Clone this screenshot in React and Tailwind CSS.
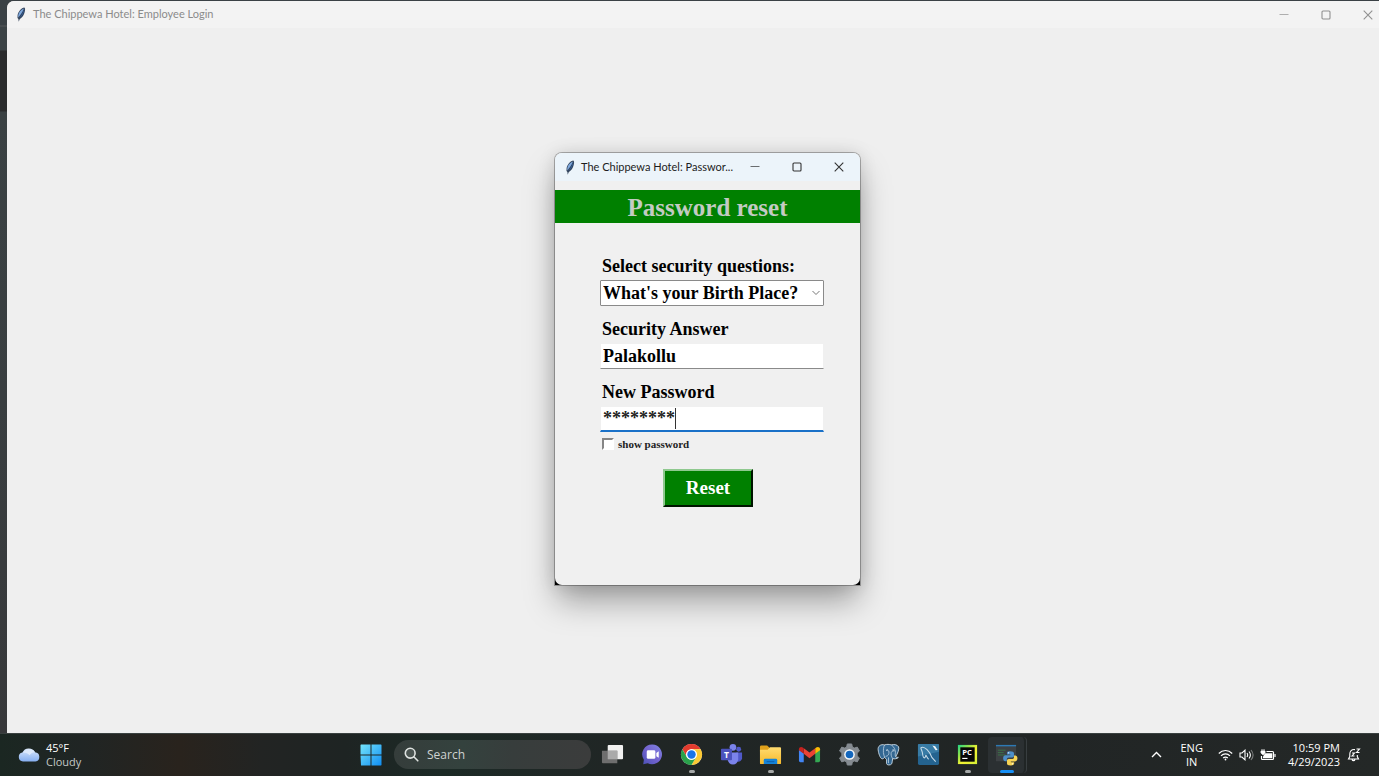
import React, { useState } from "react";

function Feather({ className }) {
  return (
    <svg viewBox="0 0 10 15" className={className} aria-hidden="true">
      <path d="M8.400.5C5.600 1 2.200 4.200 1.600 8.300L1.500 11l.9 1 .3 2.700L3.800 12c3.200-1.600 5.200-5.800 5.300-10.200z" fill="#33435a" />
      <path d="M8 1.400C5.200 2.200 2.700 5 2.300 8.300l-.1 2.200C4.200 8.500 6.300 5 8 1.400z" fill="#7fa9de" />
      <path d="M8.500 1.700C8 5.500 6.400 9 3.300 11.200 5.400 8.500 7 5.400 8.500 1.700z" fill="#2f65b0" />
    </svg>
  );
}

function WindowButtons({ className }) {
  return (
    <div className={className}>
      <button type="button" aria-label="Minimize" className="flex h-full w-[42px] items-center justify-center">
        <svg viewBox="0 0 10 10" className="size-[10px]" stroke="currentColor" fill="none"><path d="M.5 4.500h9" opacity=".7" /></svg>
      </button>
      <button type="button" aria-label="Maximize" className="flex h-full w-[42px] items-center justify-center">
        <svg viewBox="0 0 10 10" className="size-[10px]" stroke="currentColor" fill="none" strokeWidth="1.100"><rect x="1" y="1" width="8" height="8" rx="1" /></svg>
      </button>
      <button type="button" aria-label="Close" className="flex h-full w-[42px] items-center justify-center">
        <svg viewBox="0 0 10 10" className="size-[10px]" stroke="currentColor" fill="none" strokeWidth="1.100"><path d="M.7.7l8.600 8.600M9.300.7L.7 9.300" /></svg>
      </button>
    </div>
  );
}

function PasswordDialog() {
  const [question, setQuestion] = useState("birth");
  const [answer, setAnswer] = useState("Palakollu");
  const [password, setPassword] = useState("********");
  return (
    <section
      aria-label="Password reset"
      className="absolute left-[548px] top-[152px] w-[305px] rounded-t-[7px] bg-linear-to-b from-[#b4b4b4] from-80% to-black to-95% shadow-[0_0_0_1px_rgba(0,0,0,0.28),0_18px_32px_-2px_rgba(0,0,0,0.34),0_0_18px_rgba(0,0,0,0.12)]"
    >
      <div className="overflow-hidden rounded-[7px] bg-[#f0f0f0]">
        <header className="flex h-[28px] items-center bg-[#ecf4fa] pl-[10px]">
          <Feather className="h-[15px] w-[10px] shrink-0" />
          <h2 className="ml-[6px] flex-1 whitespace-nowrap font-[Lato,sans-serif] text-[11px] text-[#1c1c1c]">The Chippewa Hotel: Passwor...</h2>
          <WindowButtons className="flex h-full shrink-0 text-[#333]" />
        </header>
        <h1 className="mt-[9px] h-[33px] bg-[#008000] text-center text-[25px] font-bold leading-[36px] text-[#c3cbc3]">Password reset</h1>
        <form className="flex h-[362px] flex-col pl-[45px] pr-[36px] pt-[31px] text-[18px] font-bold text-black" onSubmit={(e) => e.preventDefault()}>
          <label htmlFor="question" className="h-[26px] pl-[2px] leading-[24px]">Select security questions:</label>
          <div className="relative mb-[11px]">
            <select
              id="question"
              value={question}
              onChange={(e) => setQuestion(e.target.value)}
              className="block h-[26px] w-full appearance-none rounded-[1px] border border-[#8a8a8a] bg-white pl-[2px] leading-[24px]"
            >
              <option value="birth">What's your Birth Place?</option>
            </select>
            <svg viewBox="0 0 8 6" className="pointer-events-none absolute right-[4px] top-[10px] h-[6px] w-[8px]" fill="none" stroke="#777"><path d="M.5 1L4 4.500 7.500 1" /></svg>
          </div>
          <label htmlFor="answer" className="h-[26px] pl-[2px] leading-[24px]">Security Answer</label>
          <input
            id="answer"
            value={answer}
            onChange={(e) => setAnswer(e.target.value)}
            className="mb-[11px] h-[26px] w-full border border-x-[#f0f0f0] border-t-[#f0f0f0] border-b-[#8a8a8a] bg-white pl-[2px] leading-[24px] outline-none"
          />
          <label htmlFor="password" className="h-[26px] pl-[2px] leading-[24px]">New Password</label>
          <div className="relative">
            <input
              id="password"
              value={password}
              onChange={(e) => setPassword(e.target.value)}
              className="block h-[26px] w-full border border-b-2 border-x-[#f0f0f0] border-t-[#f0f0f0] border-b-[#1a71c8] bg-white pl-[2px] leading-[24px] text-[#222] outline-none"
            />
            <span className="absolute left-[75px] top-[2px] h-[21px] w-px bg-[#333]" />
          </div>
          <div className="mt-[4px] flex h-[16px] items-center gap-[4px] pl-[2px]">
            <input id="show" type="checkbox" className="size-[12px] appearance-none border-2 border-b-white border-l-[#858585] border-r-white border-t-[#858585] bg-white" />
            <label htmlFor="show" className="text-[11px] leading-[16px] text-[#222]">show password</label>
          </div>
          <button
            type="submit"
            className="ml-[63px] mt-[17px] h-[38px] w-[90px] border-2 border-b-[#001500] border-l-[#8fc98f] border-r-[#001500] border-t-[#8fc98f] bg-[#008000] text-[19px] leading-[32px] text-white"
          >
            Reset
          </button>
        </form>
      </div>
    </section>
  );
}

const icons = {
  "Task View": (
    <>
      <rect x="7" y="2" width="16" height="15" rx="1" fill="#f1f1f1" />
      <path d="M1 8h16v13H2a1 1 0 0 1-1-1z" fill="#6e6e6e" />
      <path d="M7 8h10v9H7z" fill="#aaa" />
    </>
  ),
  Chat: (
    <>
      <path d="M12 1.500A10.300 10.300 0 1 1 7 21L2.300 22.300 3 17.500A10.300 10.300 0 0 1 12 1.500z" fill="url(#chatg)" />
      <rect x="6" y="7.500" width="9" height="9" rx="1.500" fill="#fff" />
      <path d="M16 10.500l2.500-2v7L16 13.700z" fill="#fff" />
    </>
  ),
  Chrome: (
    <>
      <circle cx="12" cy="12" r="11" fill="#fff" />
      <path d="M2.470 6.500A11 11 0 0 1 21.530 6.500H12a5.500 5.500 0 0 0-4.760 8.250z" fill="#e33b2e" />
      <path d="M21.530 6.500A11 11 0 0 1 12 23l4.760-8.250A5.500 5.500 0 0 0 12 6.500z" fill="#fcc934" />
      <path d="M2.470 6.500L7.240 14.750A5.500 5.500 0 0 0 16.760 14.750L12 23A11 11 0 0 1 2.470 6.500z" fill="#2aa14b" />
      <circle cx="12" cy="12" r="5.600" fill="#fff" />
      <circle cx="12" cy="12" r="4.400" fill="#1a73e8" />
    </>
  ),
  Teams: (
    <>
      <circle cx="19.500" cy="6.500" r="2.500" fill="#5059c9" />
      <circle cx="13.500" cy="4.500" r="3.500" fill="#7b83eb" />
      <path d="M17 10h6v6a4 4 0 0 1-5 3.500z" fill="#5059c9" />
      <path d="M8 10h11v7a5.500 5.500 0 0 1-11 0z" fill="#7b83eb" />
      <rect x="1" y="6" width="11.500" height="12" rx="1" fill="#4b53bc" />
      <text x="6.800" y="15.500" fontSize="9" fontWeight="700" textAnchor="middle" fill="#fff" fontFamily="Open Sans, sans-serif">T</text>
    </>
  ),
  "File Explorer": (
    <>
      <path d="M1 4a1.500 1.500 0 0 1 1.500-1.500h6L11 5v4H1z" fill="#e0a11b" />
      <path d="M1 7h8l2.500-2.500H22A1 1 0 0 1 23 5.500V21a1 1 0 0 1-1 1H2a1 1 0 0 1-1-1z" fill="url(#foldg)" />
      <path d="M5 22v-4a1.500 1.500 0 0 1 1.500-1.500h11A1.500 1.500 0 0 1 19 18v4z" fill="#1583d8" />
      <path d="M8 19h8v1H8z" fill="#0b5ca8" />
    </>
  ),
  Gmail: (
    <>
      <path d="M1 7l5 3.700V20H2.500A1.500 1.500 0 0 1 1 18.500z" fill="#4285f4" />
      <path d="M23 7l-5 3.700V20h3.500a1.500 1.500 0 0 0 1.500-1.500z" fill="#34a853" />
      <path d="M6 5.500l6 4.500 6-4.500v5.800L12 16l-6-4.700z" fill="#ea4335" />
      <path d="M1 6.500C1 4 3.500 3.500 5 4.700l1 .8v5.800L1 7.500z" fill="#c5221f" />
      <path d="M23 6.500c0-2.500-2.500-3-4-1.800l-1 .8v5.800l5-3.800z" fill="#fbbc04" />
    </>
  ),
  Settings: (
    <>
      <path d="M9.700 1h4.600l.7 3.200 2 1.100 3.100-1 2.300 4-2.400 2.200v3l2.400 2.200-2.300 4-3.100-1-2 1.100-.7 3.200H9.700L9 19.800l-2-1.100-3.100 1-2.300-4L4 13.500v-3L1.600 8.300l2.300-4 3.100 1 2-1.100z" fill="#858b91" stroke="#858b91" strokeLinejoin="round" />
      <circle cx="12" cy="12" r="5.600" fill="#f3f6f8" />
      <circle cx="12" cy="12" r="4" fill="#1266bd" />
    </>
  ),
  PostgreSQL: (
    <>
      <path d="M8 2C4 1 .8 3 1.200 7c.4 4 2.200 9 4 9.500 1.200.3 2-1 2.800-1.500.7 1.500 2 1.500 2 2.500v4c0 1.800 4.500 2 5.500 0 .6-1.500.3-3.500.8-5.200 2 .5 4.800.2 6-1.300-1.500 0-2.300 0-2.800-.7C21.500 11 23.500 6 22.500 4c-1.500-2.600-5-2.700-7.500-2-2-.7-5-.8-7 0z" fill="#336791" stroke="#d4e3ee" strokeWidth=".9" />
      <path d="M8 2C6.500 4 6.700 8 6.700 10s1 3.500 1.300 5M15 2c3 2 4.500 6 4.200 8-.2 1.800-.4 3 .3 4M9.500 8c1.500-1 3-.5 3 1.500s-.5 4-3.500 4.500M16.300 16.300c-.6-1.300-1.600-2.500-1.600-5 0-2 .8-3.300 3.800-3.200M12 15v6" fill="none" stroke="#c4d7e6" strokeWidth=".8" />
      <circle cx="10.500" cy="7" r=".6" fill="#fff" />
      <circle cx="16.800" cy="7.200" r=".6" fill="#fff" />
    </>
  ),
  "MySQL Workbench": (
    <>
      <rect x="1" y="1" width="22" height="22" rx="1.500" fill="#24638f" />
      <path d="M1 2a1 1 0 0 1 1-1h20a1 1 0 0 1 1 1v7L1 14z" fill="#387ba5" />
      <path d="M4 5c2-1.500 4.500 0 6.500 2 3 3 4 5 5 8l4 4.500M4 5c.3 2 1.500 3.500 1.700 5.500.2 2 .8 5 2 5s1-2 1.500-2.500 1.500 3 3 4" fill="none" stroke="#c6dbe8" strokeWidth="1.100" />
      <path d="M16 2.500l3 .8 2.500 4-2 .2z" fill="#f2f7fa" />
    </>
  ),
  PyCharm: (
    <>
      <rect x="2" y="2" width="20" height="20" fill="url(#pyc)" />
      <rect x="4.500" y="4.500" width="15" height="15" fill="#070707" />
      <text x="11.500" y="12.500" fontSize="8" fontWeight="700" textAnchor="middle" fill="#fff" fontFamily="Open Sans, sans-serif">PC</text>
      <path d="M6.500 15.500h5.500v1.200H6.500z" fill="#fff" />
    </>
  ),
  Python: (
    <>
      <rect x="1" y="2" width="21" height="17" fill="#3c4043" />
      <path d="M1 2h21v1.500H1z" fill="#2d79b5" />
      <path d="M3 7.500h8M3 10h6M3 12.500h8" stroke="#3a7d48" strokeWidth=".8" />
      <path d="M15.500 8.500c-2.500 0-3 1-3 2v1.500h3.500v.8h-5c-1.500 0-2.500 1.200-2.500 3.200s1 3 2.200 3h1.600v-1.800c0-1.200 1-2 2.200-2h3.500c1 0 1.800-.8 1.800-1.800v-2.900c0-1.200-1.300-2-4.300-2z" fill="#4d8fca" />
      <path d="M16.500 23.500c2.500 0 3.500-1 3.500-2v-1.500h-3.500v-.8h4.500c1.500 0 2.400-1.200 2.400-3.200s-1-3-2.200-3h-1.400v1.800c0 1.200-1 2-2 2h-3.500c-1 0-1.800.8-1.800 1.800v2.900c0 1.200 1 2 4 2z" fill="#f7d354" />
      <circle cx="14.200" cy="10.300" r=".7" fill="#fff" />
      <circle cx="18.200" cy="21.700" r=".7" fill="#fff" />
    </>
  ),
};

const running = { Chrome: true, "File Explorer": true, PyCharm: true };

function Taskbar() {
  return (
    <footer className="flex h-[43px] shrink-0 items-center border-t border-[#3a4140] bg-[linear-gradient(90deg,#1b2722_0%,#202524_6%,#29231d_13%,#222423_19%,#1e2423_25%,#1c2a26_32%,#202625_44%,#212525_75%,#242827_100%)] pb-px font-['Open_Sans',sans-serif] text-white">
      <div className="flex flex-1 items-center pl-[18px]">
        <svg viewBox="0 0 22 15" className="h-[15px] w-[22px]" aria-hidden="true">
          <path d="M5 14.500a4.500 4.500 0 0 1-.6-8.900A7 7 0 0 1 17 5.200a4.700 4.700 0 0 1 .5 9.300z" fill="url(#cloudg)" />
          <path d="M5 6c3-.6 5 .3 6.500 2.200C13 6 15 5 17 5.200 15.500 1.500 7 .5 5 6z" fill="#dce9fb" />
        </svg>
        <div className="ml-[6px] text-[11px] leading-[14px]">
          <p>45°F</p>
          <p className="text-[#c4c8c6]">Cloudy</p>
        </div>
      </div>
      <div className="flex items-center pl-[7px]">
        <button type="button" aria-label="Start" className="size-[24px]">
          <svg viewBox="0 0 24 24" className="size-[24px]">
            <path d="M2 1.500h9.500v10H1.500V2zM12.500 1.500H22l.5.5v9.500h-10zM1.500 12.500h10v10H2zM12.500 12.500h10V22l-.5.5h-9.500z" fill="url(#wing)" />
          </svg>
        </button>
        <label className="ml-[11px] flex h-[29px] w-[197px] items-center rounded-full bg-[linear-gradient(90deg,#353d3b,#34423e_35%,#373d3c_60%,#3b3c3c)] pl-[10px]">
          <svg viewBox="0 0 15 15" className="size-[15px] shrink-0" fill="none" stroke="#dfe3e1" strokeWidth="1.600" strokeLinecap="round"><circle cx="6.200" cy="6.200" r="4.900" fill="#4b5552" /><path d="M9.800 9.800l4 4" /></svg>
          <input aria-label="Search" placeholder="Search" className="ml-[8px] w-full min-w-0 bg-transparent text-[12px] placeholder:text-[#cfd3d1] outline-none" />
        </label>
        <nav aria-label="Apps" className="ml-[2px] grid w-[434px] grid-cols-11">
          {Object.keys(icons).map((name) => (
            <button
              key={name}
              type="button"
              aria-label={name}
              className={
                name === "Python"
                  ? "relative flex h-[36px] items-center justify-center rounded-[4px] border-r border-[#383e40] bg-[#2b3032] shadow-[-3px_0_0_-1px_#202525_inset]"
                  : "relative flex h-[36px] items-center justify-center"
              }
            >
              <svg viewBox="0 0 24 24" className="size-[23px]">{icons[name]}</svg>
              {running[name] && <span className="absolute bottom-0 left-1/2 h-[3px] w-[6px] -translate-x-1/2 rounded-full bg-[#a5a8a8]" />}
              {name === "Python" && <span className="absolute bottom-0 left-1/2 h-[3px] w-[14px] -translate-x-1/2 rounded-full bg-[#168ff5]" />}
            </button>
          ))}
        </nav>
      </div>
      <div className="flex flex-1 items-center justify-end pr-[18px] text-[11px] leading-[14px]">
        <button type="button" aria-label="Show hidden icons" className="mr-[18px]">
          <svg viewBox="0 0 11 7" className="h-[7px] w-[11px]" fill="none" stroke="#fff" strokeWidth="1.400"><path d="M1 6l4.500-4.500L10 6" /></svg>
        </button>
        <p className="mr-[15px] text-center">ENG<br />IN</p>
        <svg viewBox="0 0 15 12" className="mr-[6px] h-[12px] w-[15px]" fill="none" stroke="#fff" strokeWidth="1.200" aria-label="Wi-Fi">
          <path d="M.8 4.500c3.800-4 9.600-4 13.400 0M3 6.800c2.500-2.600 6.500-2.600 9 0M5.200 9c1.300-1.300 3.300-1.300 4.600 0" /><circle cx="7.500" cy="10.500" r=".9" fill="#fff" stroke="none" />
        </svg>
        <svg viewBox="0 0 15 12" className="mr-[6px] h-[12px] w-[15px]" fill="none" stroke="#fff" strokeWidth="1.100" aria-label="Volume">
          <path d="M1 4h2l3-2.800v9.600L3 8H1zM8 4c.8 1.200.8 2.800 0 4M10 2.500c1.600 2 1.600 5 0 7" /><path d="M12 1c2.500 3 2.500 7 0 10" opacity=".4" />
        </svg>
        <svg viewBox="0 0 16 13" className="h-[13px] w-[16px]" fill="none" stroke="#fff" strokeWidth="1.200" aria-label="Battery">
          <path d="M6.500 3.500h6a1 1 0 0 1 1 1v6a1 1 0 0 1-1 1h-10a1 1 0 0 1-1-1V8" /><path d="M5 5.200h7.300v5.100H3V8.500z" fill="#fff" stroke="none" /><path d="M15 6v3" /><path d="M1 3h4v1.700L3.600 6.500H2.400L1 4.700zM2 3V1M4 3V1" fill="#fff" strokeWidth=".8" />
        </svg>
        <p className="ml-[12px] text-right">10:59 PM<br />4/29/2023</p>
        <svg viewBox="0 0 14 14" className="ml-[7px] size-[14px]" fill="none" stroke="#fff" strokeWidth="1.100" aria-label="Notifications">
          <path d="M8 1.600C4.500 1 2.800 3.500 2.800 6v2.500L1.500 11h10l-1.200-2.500V7M5 11.500c.5 1.500 2.500 1.500 3 0M5 5h2.500L5 8h2.500M9.500 1h3L9.500 4.500h3" />
        </svg>
      </div>
    </footer>
  );
}

export default function App() {
  return (
    <div className="flex min-h-screen flex-col overflow-hidden bg-[#2b2d2e] font-['Liberation_Serif',serif]">
      <svg className="absolute size-0" aria-hidden="true">
        <defs>
          <linearGradient id="wing" x1="0" y1="0" x2="1" y2="1"><stop stopColor="#75e4fb" /><stop offset="1" stopColor="#0f8df2" /></linearGradient>
          <linearGradient id="cloudg" x1="0" y1="0" x2="0" y2="1"><stop stopColor="#dceafc" /><stop offset="1" stopColor="#86aff0" /></linearGradient>
          <linearGradient id="chatg" x1="0" y1="1" x2="1" y2="0"><stop stopColor="#4a51b5" /><stop offset=".5" stopColor="#7463cf" /><stop offset="1" stopColor="#7f86e4" /></linearGradient>
          <linearGradient id="foldg" x1="0" y1="0" x2="0" y2="1"><stop stopColor="#ffdb70" /><stop offset="1" stopColor="#f7b92b" /></linearGradient>
          <linearGradient id="pyc" x1="0" y1="0" x2="1" y2="1"><stop stopColor="#1fd789" /><stop offset=".3" stopColor="#8fe04a" /><stop offset=".55" stopColor="#f2f233" /><stop offset="1" stopColor="#d5ee36" /></linearGradient>
        </defs>
      </svg>
      <div className="flex flex-1 bg-[linear-gradient(180deg,#3a4145_0,#3a4145_25px,#55585a_26px,#3c4346_27px,#3c4346_50px,#2a2b2c_51px,#2a2b2c_111px,#3a4143_112px,#393e40_400px,#37383a_100%)] pl-[7px] pt-px">
        <main className="relative flex flex-1 flex-col rounded-tl-[7px] bg-[#efefef]">
          <header className="flex h-[27px] items-center rounded-tl-[7px] bg-[#f3f3f3] pl-[9px]">
            <Feather className="h-[15px] w-[10px]" />
            <h1 className="ml-[7px] flex-1 font-[Lato,sans-serif] text-[11px] text-[#8b8b8b]">The Chippewa Hotel: Employee Login</h1>
            <WindowButtons className="-mr-[10px] flex h-full text-[#909090]" />
          </header>
          <PasswordDialog />
        </main>
      </div>
      <Taskbar />
    </div>
  );
}
